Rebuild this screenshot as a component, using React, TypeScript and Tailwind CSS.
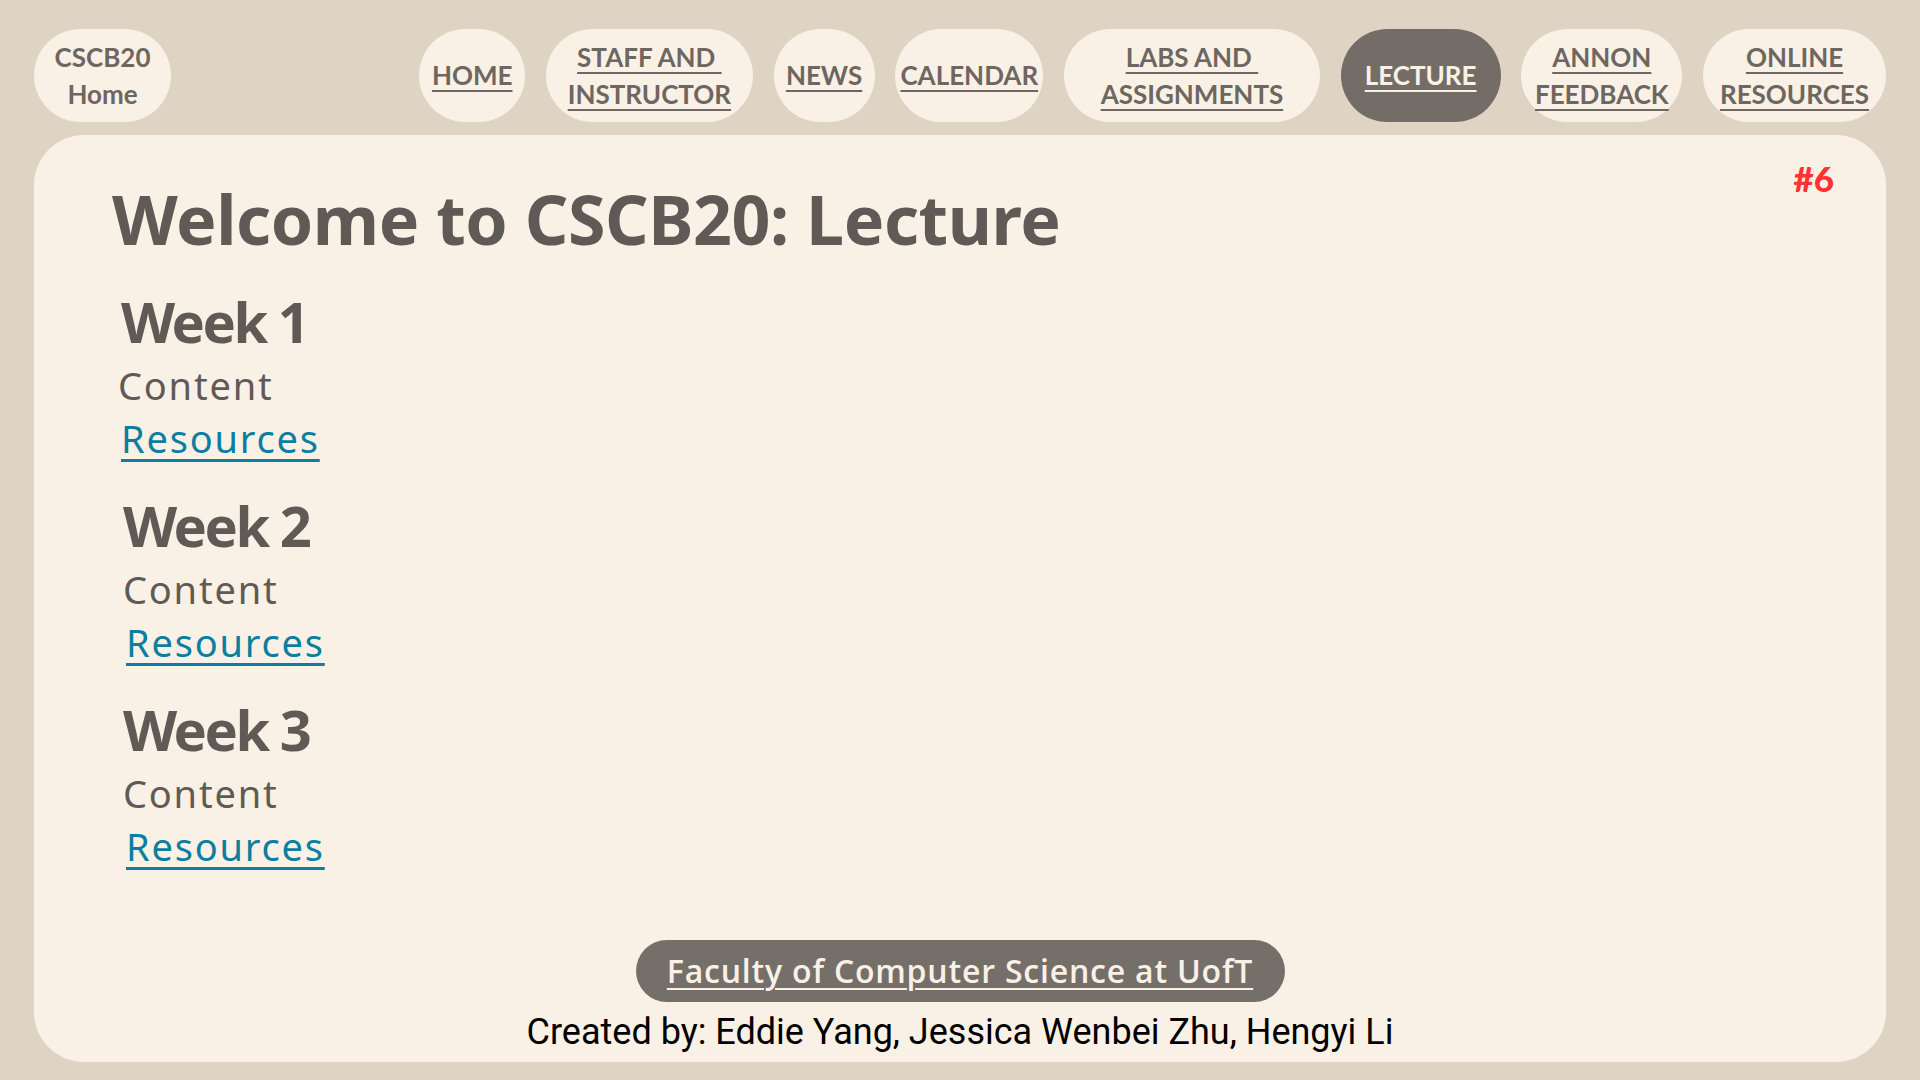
import type { ReactNode } from 'react'

const navItems: { label: ReactNode; w: string; active?: boolean }[] = [
  { label: 'HOME', w: 'w-[106px]' },
  { label: <>STAFF AND&nbsp;<br />INSTRUCTOR</>, w: 'w-[207px]' },
  { label: 'NEWS', w: 'w-[101px]' },
  { label: 'CALENDAR', w: 'w-[148px]' },
  { label: <>LABS AND&nbsp;<br />ASSIGNMENTS</>, w: 'w-[256px]' },
  { label: 'LECTURE', w: 'w-[160px]', active: true },
  { label: <>ANNON<br />FEEDBACK</>, w: 'w-[161px]' },
  { label: <>ONLINE<br />RESOURCES</>, w: 'w-[183px]' },
]

const weeks = ['Week 1', 'Week 2', 'Week 3']

function Week({ title, shift }: { title: string; shift: boolean }) {
  return (
    <section className={`flex flex-col ${shift ? 'ml-[2px]' : ''}`}>
      <h2 className="text-[56px] leading-[56px] font-bold tracking-[-2.5px]">{title}</h2>
      <p className={`mt-[17px] text-[38px] leading-[38px] tracking-[1.8px] ${shift ? '' : '-ml-[3px]'}`}>Content</p>
      <a href="#" className={`mt-[15px] self-start text-[38px] leading-[38px] tracking-[1.8px] text-[#0a7fa1] underline decoration-[3px] underline-offset-[6px] ${shift ? 'ml-[3px]' : ''}`}>
        Resources
      </a>
    </section>
  )
}

export default function App() {
  return (
    <div className="min-h-screen bg-[#dfd3c3] px-[34px] pt-[29px] text-[#5f5a55] font-['Noto_Sans',sans-serif]">
      <header className="flex h-[93px] items-center justify-between">
        <div className="flex h-[93px] w-[137px] items-center justify-center rounded-[50px] bg-[#faf1e6] text-center font-['Lato',sans-serif] text-[26px] leading-[37px] font-bold text-[#6d6661]">
          CSCB20
          <br />
          Home
        </div>
        <nav className="flex gap-[20.7px]">
          {navItems.map((item, i) => (
            <a
              key={i}
              href="#"
              className={`flex h-[93px] ${item.w} items-center justify-center rounded-[50px] text-center font-['Lato',sans-serif] text-[26px] leading-[37px] font-bold underline decoration-2 underline-offset-[5px] ${
                item.active ? 'bg-[#746d67] text-[#faf1e6]' : 'bg-[#faf1e6] text-[#6d6661]'
              }`}
            >
              <span>{item.label}</span>
            </a>
          ))}
        </nav>
      </header>

      <main className="relative mt-[13px] flex h-[927px] flex-col rounded-[50px] bg-[#faf1e6] px-[78px]">
        <span className="absolute top-[26px] right-[52px] font-['Lato',sans-serif] text-[35px] leading-[35px] font-black text-[#ff3131]">#6</span>

        <h1 className="mt-[50px] text-[68px] leading-[68px] font-bold tracking-[-0.4px]">Welcome to CSCB20: Lecture</h1>

        <div className="mt-[40px] ml-[9px] flex flex-col gap-[40px]">
          {weeks.map((w, i) => (
            <Week key={w} title={w} shift={i > 0} />
          ))}
        </div>

        <footer className="mt-auto mb-[12px] flex flex-col items-center">
          <a
            href="#"
            className="flex h-[62px] w-[649px] items-center justify-center rounded-[31px] bg-[#746f69] font-['Open_Sans',sans-serif] text-[32px] font-semibold tracking-[0.8px] text-[#faf1e6] underline decoration-2 underline-offset-[5px]"
          >
            Faculty of Computer Science at UofT
          </a>
          <p className="mt-[12px] font-['Roboto',sans-serif] text-[36px] leading-[36px] text-black">
            Created by: Eddie Yang, Jessica Wenbei Zhu, Hengyi Li
          </p>
        </footer>
      </main>
    </div>
  )
}
